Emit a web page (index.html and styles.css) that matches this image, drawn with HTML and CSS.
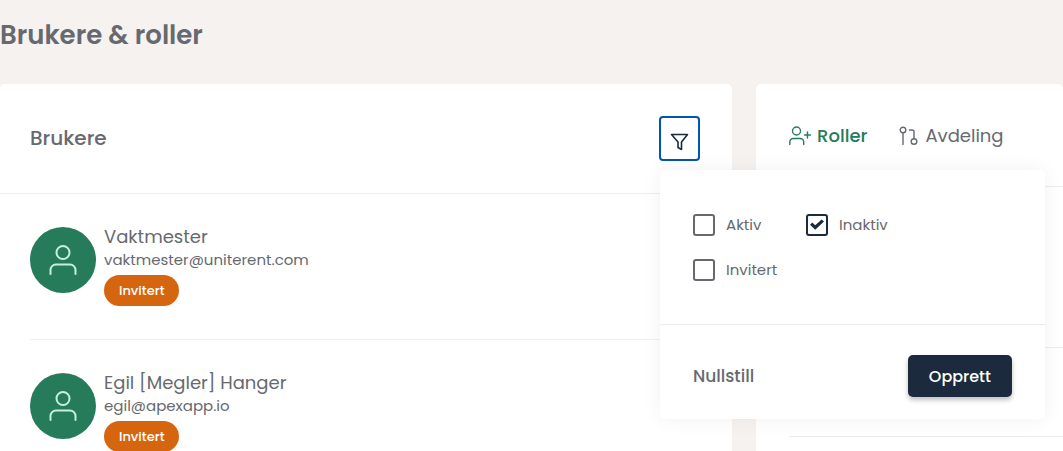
FILE: index.html
```html
<!DOCTYPE html>
<html lang="no">
<head>
    <meta charset="UTF-8">
    <meta name="viewport" content="width=device-width, initial-scale=1.0">
    <title>Brukere &amp; roller</title>
    <link rel="stylesheet" href="styles.css">
</head>
<body>
    <h1>Brukere &amp; roller</h1>
    <main class="columns">
        <section class="panel">
            <div class="panel-header">
                <h2>Brukere</h2>
                <div class="filter">
                    <button type="button" class="filter-button" aria-label="Filter" aria-expanded="true">
                        <svg width="20" height="20" viewBox="0 0 20 20" fill="none" stroke="currentColor" stroke-width="1.6" stroke-linejoin="round">
                            <path d="M1.500 2.500h16l-6 7.500v7.500l-3.500-2V10z"/>
                        </svg>
                    </button>
                    <form class="filter-menu">
                        <div class="filter-options">
                            <label><input type="checkbox" name="aktiv">Aktiv</label>
                            <label><input type="checkbox" name="inaktiv" checked>Inaktiv</label>
                            <label><input type="checkbox" name="invitert">Invitert</label>
                        </div>
                        <div class="filter-actions">
                            <button type="reset" class="reset">Nullstill</button>
                            <button type="button" class="submit">Opprett</button>
                        </div>
                    </form>
                </div>
            </div>
            <ul class="users">
                <li class="user">
                    <div class="avatar">
                        <svg width="30" height="32" viewBox="0 0 30 32" fill="none" stroke="currentColor" stroke-width="2" stroke-linecap="round">
                            <circle cx="15" cy="8.500" r="6.500"/>
                            <path d="M2.500 30v-4a5.500 5.500 0 0 1 5.500-5.500h14a5.500 5.500 0 0 1 5.500 5.500v4"/>
                        </svg>
                    </div>
                    <div class="user-info">
                        <div class="name">Vaktmester</div>
                        <div class="email">vaktmester@uniterent.com</div>
                        <span class="badge">Invitert</span>
                    </div>
                </li>
                <li class="user">
                    <div class="avatar">
                        <svg width="30" height="32" viewBox="0 0 30 32" fill="none" stroke="currentColor" stroke-width="2" stroke-linecap="round">
                            <circle cx="15" cy="8.500" r="6.500"/>
                            <path d="M2.500 30v-4a5.500 5.500 0 0 1 5.500-5.500h14a5.500 5.500 0 0 1 5.500 5.500v4"/>
                        </svg>
                    </div>
                    <div class="user-info">
                        <div class="name">Egil [Megler] Hanger</div>
                        <div class="email">egil@apexapp.io</div>
                        <span class="badge">Invitert</span>
                    </div>
                </li>
            </ul>
        </section>

        <section class="panel">
            <nav class="tabs">
                <a href="#roller" class="tab active">
                    <svg width="22" height="20" viewBox="0 0 22 20" fill="none" stroke="currentColor" stroke-width="1.4" stroke-linecap="round">
                        <circle cx="7.500" cy="5" r="4"/>
                        <path d="M.8 18.500v-2.500a3.500 3.500 0 0 1 3.500-3.500h6.900a3.500 3.500 0 0 1 3.500 3.500v2.500M18.500 6v6M15.500 9h6"/>
                    </svg>
                    Roller
                </a>
                <a href="#avdeling" class="tab">
                    <svg width="20" height="20" viewBox="0 0 20 20" fill="none" stroke="currentColor" stroke-width="1.4" stroke-linecap="round">
                        <circle cx="4" cy="4" r="2.800"/>
                        <path d="M4 7v11.500M10.500 4h2.500a2 2 0 0 1 2 2v6.500"/>
                        <circle cx="15" cy="15.500" r="2.800"/>
                    </svg>
                    Avdeling
                </a>
            </nav>
            <div class="role-rows">
                <div class="role-head"></div>
                <div class="role-row"></div>
            </div>
        </section>
    </main>
</body>
</html>
```
FILE: styles.css
```css
* {
    box-sizing: border-box;
}

body {
    font-family: Poppins, Inter, sans-serif;
    background: #f6f2ef;
    color: #66696f;
    display: flex;
    flex-direction: column;
    height: 100vh;
    margin: 0;
    overflow: hidden;
}

button {
    font-family: inherit;
    cursor: pointer;
}

h1 {
    margin: 0;
    padding: 15px 0 29px;
    font-size: 26px;
    line-height: 40px;
    font-weight: 600;
}

h2 {
    margin: 0;
    padding-bottom: 2px;
    font-size: 20px;
    line-height: 30px;
    font-weight: 500;
}

.columns {
    flex: 1;
    min-height: 0;
    display: grid;
    grid-template-columns: 31fr 13fr;
    gap: 24px;
}

.panel {
    min-width: 0;
    background: #fff;
    border-radius: 5px 5px 0 0;
}

.panel-header {
    display: flex;
    justify-content: space-between;
    align-items: center;
    height: 110px;
    padding: 0 32px 0 30px;
    border-bottom: 1px solid #eeeeee;
}

/* Filter dropdown */
.filter {
    position: relative;
}

.filter-button {
    display: flex;
    align-items: center;
    justify-content: center;
    width: 41px;
    height: 45px;
    padding: 6px 0 0;
    border: 2px solid #0054bb;
    border-radius: 4px;
    background: #fff;
    color: #1b2a3d;
}

.filter-menu {
    position: absolute;
    top: 54px;
    left: 1px;
    z-index: 1;
    width: 385px;
    background: #fff;
    border-radius: 5px;
    box-shadow: 0 0 20px rgba(0, 0, 0, 0.06);
}

.filter-options {
    display: grid;
    grid-template-columns: repeat(auto-fill, 113px);
    gap: 22px 0;
    padding: 43px 33px;
    border-bottom: 1px solid #ebebf2;
}

.filter-options label {
    display: flex;
    align-items: center;
    gap: 11px;
    font-size: 15px;
    line-height: 23px;
}

.filter-options input {
    appearance: none;
    display: grid;
    place-content: center;
    width: 22px;
    height: 22px;
    margin: 0;
    border: 2px solid #66696f;
    border-radius: 3px;
}

.filter-options input:checked {
    border-color: #1b2a3d;
}

.filter-options input:checked::before {
    content: "";
    width: 14px;
    height: 12px;
    background: #1b2a3d;
    clip-path: polygon(0 52%, 16% 34%, 37% 57%, 83% 8%, 100% 26%, 37% 94%);
}

.filter-actions {
    display: flex;
    justify-content: space-between;
    align-items: center;
    padding: 30px 33px 22px;
}

.reset {
    padding: 0;
    border: none;
    background: none;
    color: #66696f;
    font-size: 17px;
    font-weight: 500;
}

.submit {
    height: 42px;
    padding: 0 21px;
    border: none;
    border-radius: 5px;
    background: #1b2a3d;
    color: #fff;
    font-size: 16px;
    font-weight: 500;
    box-shadow: 0 3px 5px rgba(0, 0, 0, 0.25);
}

/* User list */
.users {
    list-style: none;
    margin: 0;
    padding: 0 30px;
}

.user {
    display: flex;
    gap: 8px;
    padding: 33px 0;
    border-bottom: 1px solid #eeeeee;
}

.avatar {
    display: flex;
    align-items: center;
    justify-content: center;
    width: 66px;
    height: 66px;
    border-radius: 50%;
    background: #267b5b;
    color: #c5f0dc;
}

.name {
    margin-bottom: 2px;
    font-size: 18px;
    line-height: 20px;
}

.email {
    margin-bottom: 4px;
    font-size: 15px;
    line-height: 22px;
}

.badge {
    display: block;
    width: fit-content;
    padding: 0 15px;
    border-radius: 16px;
    background: #d66510;
    color: #fff;
    font-size: 13px;
    line-height: 31px;
    font-weight: 500;
}

/* Roles */
.tabs {
    display: flex;
    align-items: center;
    gap: 32px;
    height: 103px;
    padding: 2px 0 0 33px;
    border-bottom: 1px solid #ebebf2;
}

.tab {
    display: flex;
    align-items: center;
    gap: 6px;
    color: #66696f;
    font-size: 18px;
    line-height: 26px;
    text-decoration: none;
}

.tab.active {
    color: #267b5b;
    font-weight: 500;
}

.role-rows {
    padding-left: 33px;
}

.role-head {
    height: 161px;
    border-bottom: 1px solid #ebebf2;
}

.role-row {
    height: 89px;
    border-bottom: 1px solid #ebebf2;
}
```
